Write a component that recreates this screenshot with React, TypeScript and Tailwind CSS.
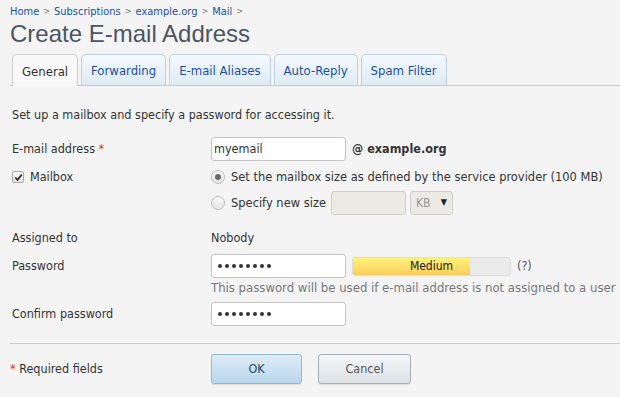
import React from 'react';

const font = "font-['DejaVu_Sans_Condensed','DejaVu_Sans',sans-serif]";

const Breadcrumbs = () => {
  const items = ['Home', 'Subscriptions', 'example.org', 'Mail'];
  return (
    <div className="flex items-center h-[14px] text-[11px] leading-none">
      {items.map((item) => (
        <React.Fragment key={item}>
          <a className="text-[#1c4fa3]">{item}</a>
          <span className="text-[#777] text-[9px] mx-[4px]">&gt;</span>
        </React.Fragment>
      ))}
    </div>
  );
};

const Tabs = () => {
  const tabs = ['General', 'Forwarding', 'E-mail Aliases', 'Auto-Reply', 'Spam Filter'];
  return (
    <div className="flex items-end gap-[3px] h-[32px] border-b border-[#c8c8c8] pl-[2px]">
      {tabs.map((tab, i) =>
        i === 0 ? (
          <div
            key={tab}
            className="h-[32px] -mb-px px-[9px] pt-[2px] flex items-center rounded-t-[5px] border border-b-0 border-[#cfcfcf] bg-[#f9f9f9] text-[#333] text-[13px]"
          >
            {tab}
          </div>
        ) : (
          <div
            key={tab}
            className="h-[31px] px-[9px] pt-[2px] flex items-center rounded-t-[5px] border border-b-0 border-[#bcd2e2] bg-gradient-to-b from-[#f5f9fd] to-[#dfebf5] text-[#1c4fa3] text-[13px]"
          >
            {tab}
          </div>
        )
      )}
    </div>
  );
};

const Radio = ({ checked }: { checked?: boolean }) => (
  <span className="w-[14px] h-[14px] rounded-full border border-[#bdbdbd] bg-gradient-to-b from-[#fafafa] to-[#e4e4e4] flex items-center justify-center shrink-0">
    {checked && <span className="w-[6px] h-[6px] rounded-full bg-[#6a6a6a]" />}
  </span>
);

const Checkbox = () => (
  <span className="w-[12px] h-[12px] rounded-[2px] border border-[#a8a8a8] bg-gradient-to-b from-[#fbfbfb] to-[#e6e6e6] flex items-center justify-center shrink-0">
    <svg width="9" height="9" viewBox="0 0 9 9">
      <path d="M1.3 4.6 L3.5 6.9 L7.8 1.6" fill="none" stroke="#333" strokeWidth="1.8" />
    </svg>
  </span>
);

const Dots = () => (
  <span className="flex items-center gap-[3px] pl-[4px]">
    {[0, 1, 2, 3, 4, 5, 6, 7].map((i) => (
      <span key={i} className="w-[4px] h-[4px] rounded-full bg-[#333]" />
    ))}
  </span>
);

const TextInput = ({ value, dots }: { value?: string; dots?: boolean }) => (
  <div className="w-[135px] h-[24px] border border-[#c4c4c4] rounded-[3px] bg-white flex items-center px-[2px] text-[12.5px] text-[#333]">
    {dots ? <Dots /> : value}
  </div>
);

const Label = ({ children }: { children: React.ReactNode }) => (
  <div className="w-[199px] shrink-0 text-[12.5px] text-[#333]">{children}</div>
);

export default function App() {
  return (
    <div className={`w-[620px] h-[397px] bg-[#f4f4f4] overflow-hidden ${font}`}>
      <div className="pl-[10px] pt-[4px]">
        <Breadcrumbs />
        <h1 className="font-['Liberation_Sans',Arial,sans-serif] text-[24px] leading-[30px] text-[#4c5562] mt-[1px]">
          Create E-mail Address
        </h1>
        <div className="mt-[5px]">
          <Tabs />
        </div>
      </div>

      <div className="pl-[12px] text-[12.5px] text-[#333]">
        <div className="h-[16px] mt-[21px] flex items-center">
          Set up a mailbox and specify a password for accessing it.
        </div>

        <div className="flex items-center h-[24px] mt-[14px]">
          <Label>
            E-mail address <span className="text-[#e0302a]">*</span>
          </Label>
          <TextInput value="myemail" />
          <span className="ml-[6px] font-bold text-[#333]">@ example.org</span>
        </div>

        <div className="flex items-center h-[20px] mt-[6px]">
          <div className="w-[199px] shrink-0 flex items-center gap-[6px]">
            <Checkbox />
            <span>Mailbox</span>
          </div>
          <Radio checked />
          <span className="ml-[6px] text-[12.75px]">Set the mailbox size as defined by the service provider (100 MB)</span>
        </div>

        <div className="flex items-center h-[24px] mt-[4px]">
          <div className="w-[199px] shrink-0" />
          <Radio />
          <span className="ml-[6px] text-[12.75px]">Specify new size</span>
          <div className="ml-[5px] w-[75px] h-[24px] border border-[#cfcfcf] rounded-[3px] bg-[#ebebe4]" />
          <div className="ml-[4px] w-[43px] h-[24px] border border-[#cfcfcf] rounded-[3px] bg-[#ebebe4] flex items-center justify-between px-[5px]">
            <span className="text-[#999] text-[12px]">KB</span>
            <span className="text-[#222] text-[9px]">▼</span>
          </div>
        </div>

        <div className="flex items-center h-[20px] mt-[13px]">
          <Label>Assigned to</Label>
          <span>Nobody</span>
        </div>

        <div className="flex items-center h-[24px] mt-[6px]">
          <Label>Password</Label>
          <TextInput dots />
          <div className="ml-[6px] w-[159px] h-[19px] border border-[#dcdcdc] rounded-[3px] bg-[#ebebeb] relative overflow-hidden">
            <div className="absolute left-0 top-0 bottom-0 w-[117px] bg-gradient-to-b from-[#fff27c] to-[#f8ce5a]" />
            <div className="absolute inset-y-0 left-0 w-[117px] flex items-center justify-center text-[12px] text-[#222] pl-[40px]">
              Medium
            </div>
          </div>
          <span className="ml-[6px] text-[#555]">(?)</span>
        </div>

        <div className="flex items-center h-[16px] mt-[2px]">
          <div className="w-[199px] shrink-0" />
          <span className="text-[#777] text-[13px] whitespace-nowrap">This password will be used if e-mail address is not assigned to a user</span>
        </div>

        <div className="flex items-center h-[24px] mt-[6px]">
          <Label>Confirm password</Label>
          <TextInput dots />
        </div>
      </div>

      <div className="ml-[10px] mt-[17px] border-t border-[#cbcbcb]" />

      <div className="pl-[10px] flex items-center h-[30px] mt-[10px] text-[12.5px]">
        <div className="w-[201px] shrink-0 text-[#333]">
          <span className="text-[#e0302a]">*</span> Required fields
        </div>
        <button className="w-[91px] h-[30px] rounded-[3px] border border-[#92b7d8] bg-gradient-to-b from-[#deedf8] to-[#bad6ec] text-[#2a4760] shadow-[0_1px_1px_rgba(0,0,0,0.1)]">
          OK
        </button>
        <button className="ml-[16px] w-[93px] h-[30px] rounded-[3px] border border-[#a9b1b8] bg-gradient-to-b from-[#f5f7f9] to-[#dce1e5] text-[#555] shadow-[0_1px_1px_rgba(0,0,0,0.1)]">
          Cancel
        </button>
      </div>
    </div>
  );
}
